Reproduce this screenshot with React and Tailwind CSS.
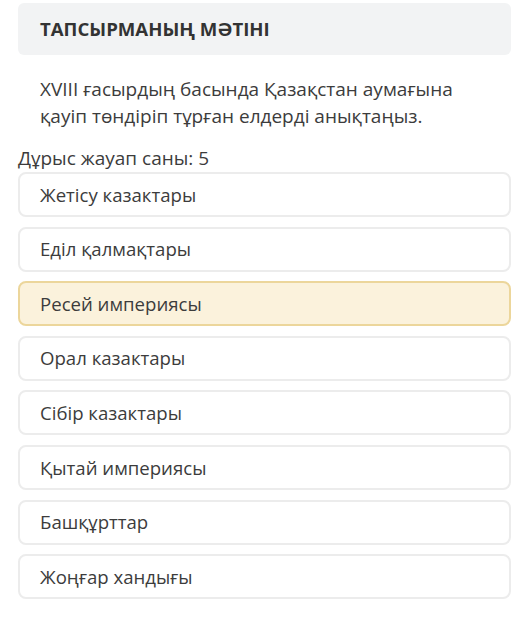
const options = [
  { text: "Жетісу казактары" },
  { text: "Еділ қалмақтары" },
  { text: "Ресей империясы", picked: true },
  { text: "Орал казактары" },
  { text: "Сібір казактары" },
  { text: "Қытай империясы" },
  { text: "Башқұрттар" },
  { text: "Жоңғар хандығы" },
];

export default function App() {
  return (
    <div className="h-[633px] bg-white pl-[18px] pr-[8px] pt-[3px] font-['Open_Sans',sans-serif] text-[#3c3c3c]">
      <div className="flex h-[52px] items-center rounded-md bg-[#f2f3f4] pl-[22px] text-[18.6px] font-bold text-[#333]">
        ТАПСЫРМАНЫҢ МӘТІНІ
      </div>
      <p className="mt-[21px] pl-[22px] text-[19px] leading-[27px]">
        XVIII ғасырдың басында Қазақстан аумағына
        <br />
        қауіп төндіріп тұрған елдерді анықтаңыз.
      </p>
      <p className="mt-[16px] text-[19px] leading-[24px]">Дұрыс жауап саны: 5</p>
      <div className="mt-[2px] flex flex-col gap-[9.6px]">
        {options.map((option) => (
          <div
            key={option.text}
            className={
              option.picked
                ? "flex h-[45px] items-center rounded-lg border-2 border-[#ecd69b] bg-[#fbf2dc] pl-[20px] text-[18.6px]"
                : "flex h-[45px] items-center rounded-lg border-2 border-[#ececec] bg-white pl-[20px] text-[18.6px]"
            }
          >
            {option.text}
          </div>
        ))}
      </div>
    </div>
  );
}
